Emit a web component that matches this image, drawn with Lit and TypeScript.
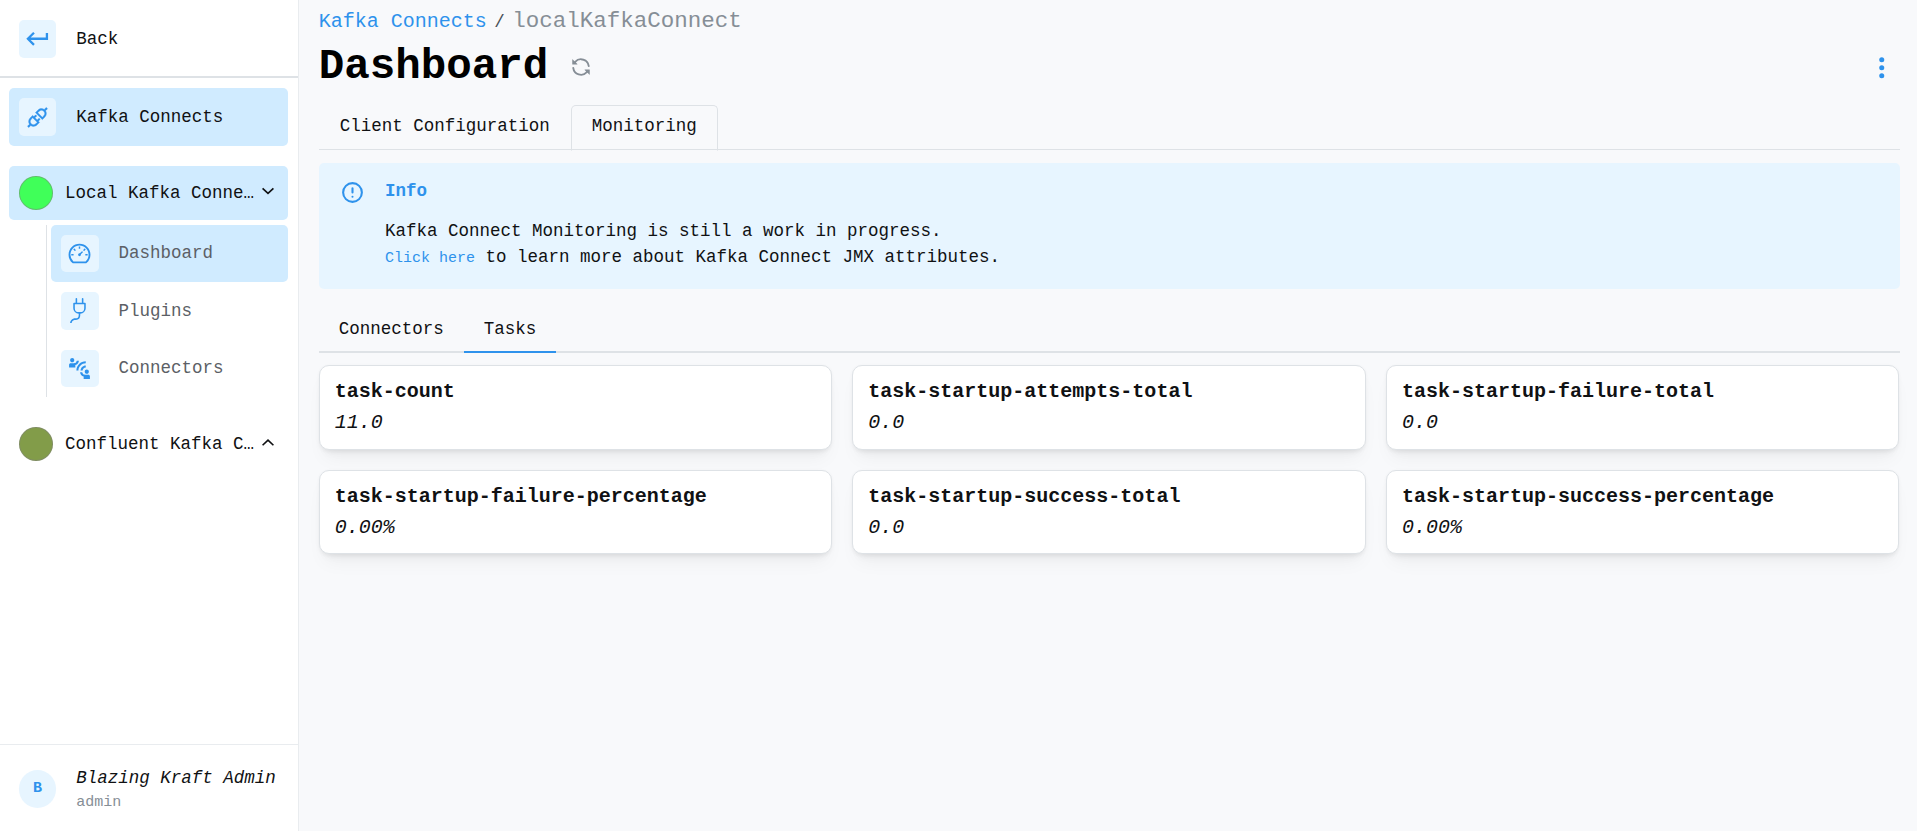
import { LitElement, html, css, svg, TemplateResult } from "lit";
import { customElement, property, state } from "lit/decorators.js";
import { classMap } from "lit/directives/class-map.js";

const icon = (viewBox: string, body: TemplateResult, size = 20) => html`
  <svg width=${size} height=${size} viewBox=${viewBox} fill="currentColor" aria-hidden="true">${body}</svg>
`;

const icons = {
  back: icon("0 0 24 24", svg`<path d="M19 7v4H5.83l3.58-3.59L8 6l-6 6 6 6 1.41-1.41L5.83 13H21V7z"/>`, 22),
  api: icon(
    "0 0 1024 1024",
    svg`<path stroke="currentColor" stroke-width="16" d="M917.7 148.8l-42.4-42.4c-1.6-1.6-3.6-2.3-5.7-2.3s-4.1.8-5.7 2.3l-76.1 76.1a199.27 199.27 0 00-112.1-34.3c-51.2 0-102.4 19.5-141.5 58.6L432.3 308.7a8.03 8.03 0 000 11.3L704 591.7c1.6 1.6 3.6 2.3 5.7 2.3 2 0 4.1-.8 5.7-2.3l101.9-101.9c68.9-69 77-175.7 24.3-253.5l76.1-76.1c3.1-3.2 3.1-8.3 0-11.4zM769.1 441.7l-59.4 59.4-186.8-186.8 59.4-59.4c24.9-24.9 58.1-38.7 93.4-38.7 35.3 0 68.4 13.7 93.4 38.7 24.9 24.9 38.7 58.1 38.7 93.4 0 35.3-13.8 68.4-38.7 93.4zm-190.2 105a8.03 8.03 0 00-11.3 0L501 613.3 410.7 523l66.7-66.7c3.1-3.1 3.1-8.2 0-11.3L441 408.6a8.03 8.03 0 00-11.3 0L363 475.3l-43-43a7.85 7.85 0 00-5.7-2.3c-2 0-4.1.8-5.7 2.3L206.8 534.2c-68.9 69-77 175.7-24.3 253.5l-76.1 76.1a8.03 8.03 0 000 11.3l42.4 42.4c1.6 1.6 3.6 2.3 5.7 2.3s4.1-.8 5.7-2.3l76.1-76.1c33.7 22.9 72.9 34.3 112.1 34.3 51.2 0 102.4-19.5 141.5-58.6l101.9-101.9c3.1-3.1 3.1-8.2 0-11.3l-43-43 66.7-66.7c3.1-3.1 3.1-8.2 0-11.3l-36.6-36.2zM441.7 769.1a131.32 131.32 0 01-93.4 38.7c-35.3 0-68.4-13.7-93.4-38.7a131.32 131.32 0 01-38.7-93.4c0-35.3 13.7-68.4 38.7-93.4l59.4-59.4 186.8 186.8-59.4 59.4z"/>`
  ),
  dashboard: icon(
    "0 0 1024 1024",
    svg`<path d="M924.8 385.6a446.7 446.7 0 00-96-142.4 446.7 446.7 0 00-142.4-96C631.1 123.8 572.5 112 512 112s-119.1 11.8-174.4 35.2a446.7 446.7 0 00-142.4 96 446.7 446.7 0 00-96 142.4C75.8 440.9 64 499.5 64 560c0 132.7 58.3 257.7 159.9 343.1l1.7 1.4c5.8 4.8 13.1 7.5 20.6 7.5h531.7c7.5 0 14.8-2.7 20.6-7.5l1.7-1.4C901.7 817.7 960 692.7 960 560c0-60.5-11.9-119.1-35.2-174.4zM761.4 836H262.6A371.12 371.12 0 01140 560c0-99.4 38.7-192.8 109-263 70.3-70.3 163.7-109 263-109 99.4 0 192.8 38.7 263 109 70.3 70.3 109 163.7 109 263 0 105.6-44.5 205.5-122.6 276zM623.5 421.5a8.03 8.03 0 00-11.3 0L527.7 506c-18.7-5-39.4-.2-54.1 14.5a55.95 55.95 0 000 79.2 55.95 55.95 0 0079.2 0 55.87 55.87 0 0014.5-54.1l84.5-84.5c3.1-3.1 3.1-8.2 0-11.3l-28.3-28.3zM490 320h44c4.4 0 8-3.6 8-8v-80c0-4.4-3.6-8-8-8h-44c-4.4 0-8 3.6-8 8v80c0 4.4 3.6 8 8 8zm260 218v44c0 4.4 3.6 8 8 8h80c4.4 0 8-3.6 8-8v-44c0-4.4-3.6-8-8-8h-80c-4.4 0-8 3.6-8 8zm12.7-197.2l-31.1-31.1a8.03 8.03 0 00-11.3 0l-56.6 56.6a8.03 8.03 0 000 11.3l31.1 31.1c3.1 3.1 8.2 3.1 11.3 0l56.6-56.6c3.1-3.1 3.1-8.2 0-11.3zm-458.6-31.1a8.03 8.03 0 00-11.3 0l-31.1 31.1a8.03 8.03 0 000 11.3l56.6 56.6c3.1 3.1 8.2 3.1 11.3 0l31.1-31.1c3.1-3.1 3.1-8.2 0-11.3l-56.6-56.6zM262 530h-80c-4.4 0-8 3.6-8 8v44c0 4.4 3.6 8 8 8h80c4.4 0 8-3.6 8-8v-44c0-4.4-3.6-8-8-8z"/>`
  ),
  plug: icon(
    "0 0 16 16",
    svg`<path d="M6 0a.5.5 0 0 1 .5.5V3h3V.5a.5.5 0 0 1 1 0V3h1a.5.5 0 0 1 .5.5v3A3.5 3.5 0 0 1 8.5 10c-.002.434-.01.845-.04 1.22-.041.514-.126 1.003-.317 1.424a2.083 2.083 0 0 1-.97 1.028C6.725 13.9 6.169 14 5.5 14c-.998 0-1.61.33-1.974.718A1.922 1.922 0 0 0 3 16H2c0-.616.232-1.367.797-1.968C3.374 13.42 4.261 13 5.5 13c.581 0 .962-.088 1.218-.219.241-.123.4-.3.514-.55.121-.266.193-.621.23-1.09.027-.34.035-.718.037-1.141A3.5 3.5 0 0 1 4 6.5v-3a.5.5 0 0 1 .5-.5h1V.5A.5.5 0 0 1 6 0zM5 4v2.5A2.5 2.5 0 0 0 7.5 9h1A2.5 2.5 0 0 0 11 6.5V4H5z"/>`
  ),
  connectors: icon(
    "0 0 24 24",
    svg`<path d="M11 14H9c0-4.97 4.03-9 9-9v2c-3.87 0-7 3.13-7 7zm7-3V9c-2.76 0-5 2.24-5 5h2c0-1.66 1.34-3 3-3zM7 4c0-1.11-.89-2-2-2s-2 .89-2 2 .89 2 2 2 2-.89 2-2zm4.45.5h-2A2.99 2.99 0 0 1 6.5 7h-3C2.67 7 2 7.67 2 8.5V11h6V8.74a4.97 4.97 0 0 0 3.45-4.24zM19 17c1.11 0 2-.89 2-2s-.89-2-2-2-2 .89-2 2 .89 2 2 2zm1.5 1h-3a2.99 2.99 0 0 1-2.95-2.5h-2A4.97 4.97 0 0 0 16 19.74V22h6v-2.5c0-.83-.67-1.5-1.5-1.5z"/>`
  ),
  sync: icon(
    "0 0 16 16",
    svg`<path d="M1.705 8.005a.75.75 0 0 1 .834.656 5.5 5.5 0 0 0 9.592 2.97l-1.204-1.204a.25.25 0 0 1 .177-.427h3.646a.25.25 0 0 1 .25.25v3.646a.25.25 0 0 1-.427.177l-1.38-1.38A7.002 7.002 0 0 1 1.05 8.84a.75.75 0 0 1 .656-.834ZM8 2.5a5.487 5.487 0 0 0-4.131 1.869l1.204 1.204A.25.25 0 0 1 4.896 6H1.25A.25.25 0 0 1 1 5.75V2.104a.25.25 0 0 1 .427-.177l1.38 1.38A7.002 7.002 0 0 1 14.95 7.16a.75.75 0 0 1-1.49.178A5.5 5.5 0 0 0 8 2.5Z"/>`,
    16
  ),
  more: icon(
    "0 0 24 24",
    svg`<circle cx="12" cy="5" r="2.2"/><circle cx="12" cy="12" r="2.2"/><circle cx="12" cy="19" r="2.2"/>`,
    22
  ),
  alert: icon(
    "0 0 24 24",
    svg`<g fill="none" stroke="currentColor" stroke-width="2" stroke-linecap="round"><circle cx="12" cy="12" r="9"/><path d="M12 8v4M12 16v.01"/></g>`
  ),
  down: icon(
    "0 0 24 24",
    svg`<path d="M5.5 6.5l6.5 6 6.5-6" fill="none" stroke="currentColor" stroke-width="2"/>`,
    16
  ),
  up: icon(
    "0 0 24 24",
    svg`<path d="M5.5 13.5l6.5-6 6.5 6" fill="none" stroke="currentColor" stroke-width="2"/>`,
    16
  ),
};

const reset = css`
  *,
  *::before,
  *::after {
    box-sizing: border-box;
  }
  svg {
    display: block;
    flex: none;
  }
  a {
    color: inherit;
    text-decoration: none;
  }
  button {
    margin: 0;
    padding: 0;
    border: 0;
    background: none;
    color: inherit;
    font: inherit;
    text-align: left;
    cursor: pointer;
  }
  h1,
  h2,
  p,
  dl,
  dt,
  dd {
    margin: 0;
  }
`;

@customElement("side-nav")
export class SideNav extends LitElement {
  @state() private localOpen = true;

  static styles = [
    reset,
    css`
      :host {
        display: flex;
        flex-direction: column;
        background: #fff;
        border-right: 1px solid #e9ecef;
      }
      .back {
        padding: 8px 8px 7px 7px;
        border-bottom: 2px solid #dee2e6;
      }
      .items {
        flex: 1;
        display: flex;
        flex-direction: column;
        gap: 16px;
        padding: 8px 8px 16px 7px;
      }
      .link {
        display: flex;
        align-items: center;
        gap: 16px;
        padding: 8px;
        border-radius: 4px;
      }
      .active {
        background: #d0ebff;
      }
      .tile {
        display: grid;
        place-items: center;
        flex: none;
        width: 30px;
        height: 30px;
        border-radius: 4px;
        background: #e7f5ff;
        color: var(--accent);
      }
      .label {
        padding-top: 1px;
      }
      .group {
        display: flex;
        flex-direction: column;
        gap: 4px;
      }
      .toggle {
        display: flex;
        align-items: center;
        width: 100%;
        padding: 8px;
        border-radius: 4px;
      }
      .dot {
        flex: none;
        width: 27px;
        height: 27px;
        margin-right: 10px;
        border: 1px solid rgb(128 128 128 / 50%);
        border-radius: 50%;
      }
      .green {
        background: #40ff59;
      }
      .olive {
        background: #829c49;
      }
      .name {
        flex: 1;
        min-width: 0;
        margin-right: 2px;
        padding-top: 1px;
        overflow: hidden;
        text-overflow: ellipsis;
        white-space: nowrap;
      }
      .children {
        margin-left: 30px;
        padding-left: 3px;
        border-left: 1px solid #dee2e6;
        color: #5c5f66;
      }
      .user {
        display: flex;
        align-items: center;
        gap: 16px;
        padding: 15px 8px 13px 15px;
        border-top: 1px solid #e9ecef;
      }
      .avatar {
        display: grid;
        place-items: center;
        flex: none;
        width: 30px;
        height: 30px;
        border-radius: 50%;
        background: #e7f5ff;
        color: var(--accent);
        font-size: 12px;
        font-weight: 700;
      }
      .full {
        line-height: 23px;
        font-style: italic;
        white-space: nowrap;
      }
      .login {
        font-size: 12px;
        line-height: 18px;
        color: #868e96;
      }
    `,
  ];

  private link(label: string, glyph: TemplateResult, active = false) {
    return html`<a href="#" class=${classMap({ link: true, active })}>
      <span class="tile">${glyph}</span><span class="label">${label}</span>
    </a>`;
  }

  render() {
    return html`
      <div class="back">${this.link("Back", icons.back)}</div>
      <nav class="items" aria-label="Clusters">
        ${this.link("Kafka Connects", icons.api, true)}
        <div class="group">
          <button
            class="toggle active"
            aria-expanded=${this.localOpen}
            @click=${() => (this.localOpen = !this.localOpen)}
          >
            <span class="dot green"></span>
            <span class="name">Local Kafka Connect</span>
            ${this.localOpen ? icons.down : icons.up}
          </button>
          ${this.localOpen
            ? html`<div class="children">
                ${this.link("Dashboard", icons.dashboard, true)}
                ${this.link("Plugins", icons.plug)}
                ${this.link("Connectors", icons.connectors)}
              </div>`
            : null}
        </div>
        <button class="toggle" aria-expanded="false">
          <span class="dot olive"></span>
          <span class="name">Confluent Kafka Connect</span>
          ${icons.up}
        </button>
      </nav>
      <div class="user">
        <span class="avatar">B</span>
        <div>
          <div class="full">Blazing Kraft Admin</div>
          <div class="login">admin</div>
        </div>
      </div>
    `;
  }
}

@customElement("metric-card")
export class MetricCard extends LitElement {
  @property() name = "";
  @property() value = "";

  static styles = [
    reset,
    css`
      :host {
        display: block;
        padding: 8px 12px;
        border: 1px solid #dee2e6;
        border-radius: 8px;
        background: #fff;
        box-shadow:
          0 1px 3px rgb(0 0 0 / 5%),
          0 10px 15px -5px rgb(0 0 0 / 5%),
          0 7px 7px -5px rgb(0 0 0 / 4%);
        box-sizing: border-box;
        font-size: 16px;
        line-height: 25px;
      }
      .name {
        font-weight: 700;
      }
      .value {
        font-style: italic;
      }
    `,
  ];

  render() {
    return html`<dl>
      <dt class="name">${this.name}</dt>
      <dd class="value">${this.value}</dd>
    </dl>`;
  }
}

@customElement("app-root")
export class AppRoot extends LitElement {
  @state() private tab = "Tasks";

  private metrics = [
    ["task-count", "11.0"],
    ["task-startup-attempts-total", "0.0"],
    ["task-startup-failure-total", "0.0"],
    ["task-startup-failure-percentage", "0.00%"],
    ["task-startup-success-total", "0.0"],
    ["task-startup-success-percentage", "0.00%"],
  ];

  static styles = [
    reset,
    css`
      /* The whole interface is shown at a 125% scale. */
      :host {
        --ui-scale: 1.25;
        --accent: #2e92ec;
        zoom: var(--ui-scale);
        display: grid;
        grid-template-columns: 239px minmax(0, 1fr);
        min-height: calc(100vh / var(--ui-scale));
        background: #f8f9fb;
        color: #101113;
        font-family: "Liberation Mono", "Courier New", monospace;
        font-size: 14px;
        line-height: 22px;
      }
      main {
        padding: 4px 14px 16px 16px;
      }
      .crumbs {
        display: flex;
        align-items: baseline;
        gap: 6px;
        line-height: 26px;
      }
      .crumb-link {
        font-size: 16px;
        color: var(--accent);
      }
      .crumb-sep {
        color: #495057;
      }
      .crumb-current {
        font-size: 18px;
        color: #868e96;
      }
      .heading {
        display: flex;
        align-items: center;
        gap: 12px;
      }
      .title {
        font-size: 34px;
        line-height: 46px;
        font-weight: 700;
        color: #000;
      }
      .icon-button {
        display: grid;
        place-items: center;
        width: 28px;
        height: 28px;
        color: #868e96;
      }
      .menu {
        margin-left: auto;
        color: var(--accent);
      }
      .tabs {
        display: flex;
        line-height: 14px;
      }
      .outline {
        margin-top: 7px;
        border-bottom: 1px solid #dee2e6;
      }
      .outline .tab {
        margin-bottom: -1px;
        padding: 10px 16px 11px;
        border: 1px solid transparent;
        border-radius: 4px 4px 0 0;
      }
      .outline .selected {
        border-color: #dee2e6;
        border-bottom-color: #f8f9fb;
      }
      .underline {
        margin-top: 16px;
        border-bottom: 2px solid #dee2e6;
      }
      .underline .tab {
        margin-bottom: -2px;
        padding: 10px 16px;
        border-bottom: 2px solid transparent;
      }
      .underline .selected {
        border-bottom-color: var(--accent);
      }
      .notice {
        display: flex;
        gap: 16px;
        margin-top: 10px;
        padding: 12px 17px 13px;
        border-radius: 4px;
        background: #e7f5ff;
      }
      .notice-icon {
        padding-top: 2px;
        color: var(--accent);
      }
      .notice-title {
        font-size: 14px;
        color: var(--accent);
      }
      .notice-text {
        margin-top: 10px;
        line-height: 21px;
      }
      .notice-link {
        font-size: 12px;
        color: var(--accent);
      }
      .cards {
        display: grid;
        grid-template-columns: repeat(3, minmax(0, 1fr));
        gap: 16px;
        margin-top: 10px;
      }
    `,
  ];

  private tabButton(label: string, selected: boolean, select?: () => void) {
    return html`<button
      role="tab"
      class=${classMap({ tab: true, selected })}
      aria-selected=${selected}
      @click=${select}
    >${label}</button>`;
  }

  render() {
    return html`
      <side-nav></side-nav>
      <main>
        <nav class="crumbs" aria-label="Breadcrumb">
          <a class="crumb-link" href="#">Kafka Connects</a>
          <span class="crumb-sep">/</span>
          <span class="crumb-current">localKafkaConnect</span>
        </nav>
        <div class="heading">
          <h1 class="title">Dashboard</h1>
          <button class="icon-button" aria-label="Refresh">${icons.sync}</button>
          <button class="icon-button menu" aria-label="More actions">${icons.more}</button>
        </div>
        <div class="tabs outline" role="tablist">
          ${this.tabButton("Client Configuration", false)}${this.tabButton("Monitoring", true)}
        </div>
        <section class="notice">
          <div class="notice-icon">${icons.alert}</div>
          <div>
            <h2 class="notice-title">Info</h2>
            <p class="notice-text">
              Kafka Connect Monitoring is still a work in progress.<br />
              <a class="notice-link" href="#">Click here</a> to learn more about Kafka Connect JMX attributes.
            </p>
          </div>
        </section>
        <div class="tabs underline" role="tablist">
          ${["Connectors", "Tasks"].map((t) => this.tabButton(t, this.tab === t, () => (this.tab = t)))}
        </div>
        <div class="cards">
          ${this.metrics.map(([name, value]) => html`<metric-card .name=${name} .value=${value}></metric-card>`)}
        </div>
      </main>
    `;
  }
}
